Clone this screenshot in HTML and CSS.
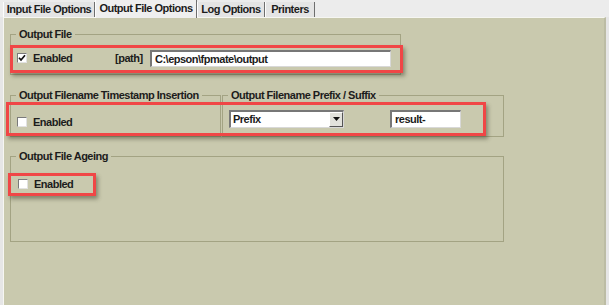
FILE: index.html
```html
<!DOCTYPE html>
<html lang="en">
<head>
    <meta charset="UTF-8">
    <meta name="viewport" content="width=device-width, initial-scale=1.0">
    <title>Output File Options</title>
    <link rel="stylesheet" href="styles.css">
</head>
<body>
    <div class="tabs">
        <div class="tab tab-input">Input File Options</div>
        <div class="tab tab-output active">Output File Options</div>
        <div class="tab tab-log">Log Options</div>
        <div class="tab tab-printers">Printers</div>
    </div>

    <div class="panel">
        <fieldset class="group group-output">
            <legend>Output File</legend>
            <div class="row">
                <label class="check check-wide"><span class="box checked"><svg width="8" height="8" viewBox="0 0 8 8"><path d="M1 3.8 L3 6 L7 1.3" fill="none" stroke="#111" stroke-width="1.7"/></svg></span>Enabled</label>
                <span class="path-label">[path]</span>
                <span class="field field-path">C:\epson\fpmate\output</span>
            </div>
        </fieldset>

        <div class="pair">
            <fieldset class="group group-stamp">
                <legend>Output Filename Timestamp Insertion</legend>
                <div class="row row-stamp">
                    <label class="check"><span class="box"></span>Enabled</label>
                </div>
            </fieldset>
            <fieldset class="group group-prefix">
                <legend>Output Filename Prefix / Suffix</legend>
                <div class="row">
                    <div class="combo">
                        <span class="combo-value">Prefix</span>
                        <span class="combo-btn"><svg width="7" height="4" viewBox="0 0 7 4"><path d="M0 0 H7 L3.5 4 Z" fill="#111"/></svg></span>
                    </div>
                    <span class="field field-affix">result-</span>
                </div>
            </fieldset>
        </div>

        <fieldset class="group group-ageing">
            <legend>Output File Ageing</legend>
            <div class="row row-ageing">
                <label class="check"><span class="box"></span>Enabled</label>
            </div>
        </fieldset>

        <!-- red highlight marks drawn over the form -->
        <div class="mark mark-output"></div>
        <div class="mark mark-pair"></div>
        <div class="mark mark-ageing"></div>
    </div>
</body>
</html>
```

FILE: styles.css
```css
body {
    margin: 0;
    font-family: "Liberation Sans", Arial, sans-serif;
    font-size: 11px;
    color: #1c1c1c;
    background-color: #e6e6e6;
    height: 305px;
    overflow: hidden;
}
.tabs {
    display: flex;
    height: 17px;
    padding-left: 3px;
    background-color: #ececec;
}
.tab {
    box-sizing: border-box;
    margin-top: 2px;
    height: 15px;
    line-height: 14px;
    text-align: center;
    font-weight: bold;
    letter-spacing: -0.5px;
    background-color: #e4e4e4;
    border-left: 1px solid #fdfdfd;
    border-right: 1px solid #6e6e6e;
}
.tab-input { width: 92px; }
.tab-output { width: 102px; }
.tab-log { width: 68px; }
.tab-printers { width: 50px; }
.tab.active {
    margin-top: 0;
    height: 18px;
    line-height: 17px;
    background-color: #efefef;
    position: relative;
    z-index: 1;
}
.panel {
    position: relative;
    box-sizing: border-box;
    width: 603px;
    height: 288px;
    margin-left: 3px;
    padding: 10px 0 0 6px;
    background-color: #c9c9ae;
    border-top: 1px solid #f6f6f2;
    border-left: 1px solid #f6f6f2;
    border-right: 2px solid #bcbca4;
}
.group {
    margin: 0;
    padding: 0;
    min-width: 0;
    border: 1px solid #a3a383;
}
.group legend {
    margin-left: 5px;
    padding: 0 3px;
    line-height: 13px;
    font-weight: bold;
    letter-spacing: -0.5px;
}
.group-output {
    box-sizing: border-box;
    width: 391px;
    padding-bottom: 7px;
}
.row {
    display: flex;
    align-items: center;
    height: 18px;
    margin-top: 8px;
    padding-left: 6px;
}
.check {
    display: flex;
    align-items: center;
    font-weight: bold;
    letter-spacing: -0.5px;
}
.check-wide { width: 98px; }
.box {
    box-sizing: border-box;
    width: 10px;
    height: 10px;
    margin-right: 6px;
    display: flex;
    align-items: center;
    justify-content: center;
    background-color: #fff;
    border-top: 1px solid #7a7a7a;
    border-left: 1px solid #7a7a7a;
    border-right: 1px solid #e2e2e2;
    border-bottom: 1px solid #e2e2e2;
}
.path-label {
    width: 35px;
    font-weight: bold;
    letter-spacing: -0.5px;
}
.field {
    box-sizing: border-box;
    height: 17px;
    line-height: 14px;
    padding-left: 3px;
    background-color: #fff;
    font-weight: bold;
    letter-spacing: -0.5px;
    border-top: 2px solid #777;
    border-left: 2px solid #777;
    border-right: 1px solid #d8d8d8;
    border-bottom: 1px solid #d8d8d8;
}
.field-path { width: 241px; }
.pair {
    display: flex;
    gap: 1px;
    margin-top: 14px;
}
.group-stamp {
    box-sizing: border-box;
    width: 211px;
    padding-bottom: 7px;
}
.row-stamp { padding-top: 5px; height: 14px; }
.group-prefix {
    box-sizing: border-box;
    width: 282px;
    padding-bottom: 7px;
}
.group-prefix .row {
    margin-top: 7px;
    height: 19px;
}
.combo {
    box-sizing: border-box;
    display: flex;
    align-items: stretch;
    width: 115px;
    height: 18px;
    background-color: #fff;
    border-top: 2px solid #777;
    border-left: 2px solid #777;
    border-right: 1px solid #d8d8d8;
    border-bottom: 1px solid #d8d8d8;
}
.combo-value {
    flex: 1;
    line-height: 14px;
    padding-left: 2px;
    font-weight: bold;
    letter-spacing: -0.5px;
}
.combo-btn {
    box-sizing: border-box;
    width: 14px;
    display: flex;
    align-items: center;
    justify-content: center;
    background-color: #e2e2dc;
    border-top: 1px solid #fff;
    border-left: 1px solid #fff;
    border-right: 1px solid #555;
    border-bottom: 1px solid #555;
}
.field-affix {
    width: 71px;
    height: 18px;
    margin-left: 46px;
}
.group-ageing {
    box-sizing: border-box;
    width: 494px;
    margin-top: 13px;
    padding-bottom: 50px;
}
.row-ageing {
    margin-top: 14px;
    height: 14px;
    padding-left: 7px;
}
.mark {
    position: absolute;
    box-sizing: border-box;
    border: 3px solid #f04646;
    box-shadow: 2px 3px 4px rgba(50, 50, 30, 0.45);
}
.mark-output { left: 6px; top: 27px; width: 393px; height: 28px; }
.mark-pair { left: 2px; top: 84px; width: 480px; height: 34px; }
.mark-ageing { left: 4px; top: 155px; width: 88px; height: 23px; }
```
